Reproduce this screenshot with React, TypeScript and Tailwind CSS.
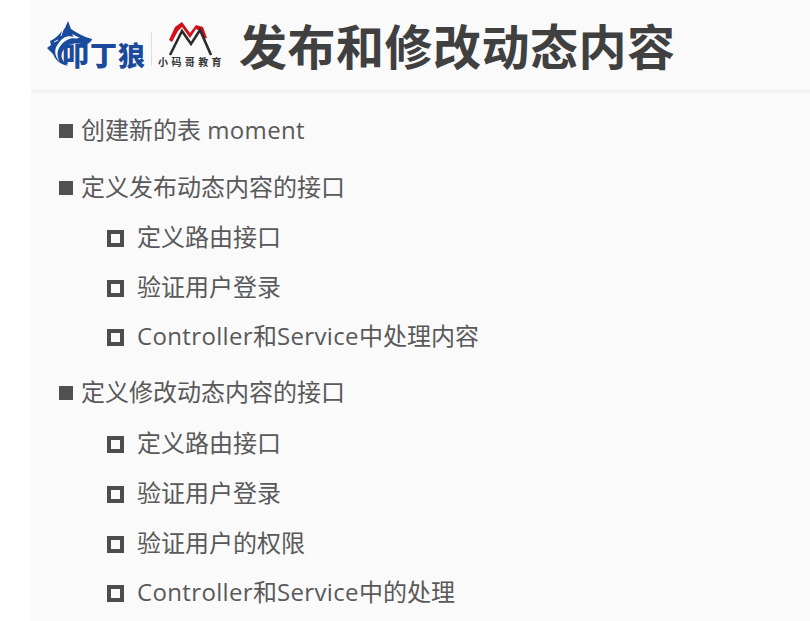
const font = { fontFamily: '"Open Sans","Noto Sans CJK SC",sans-serif' };

function Latin({ children }: { children: React.ReactNode }) {
  return <span className="tracking-[0.35px]">{children}</span>;
}

function L1({ children, className = "" }: { children: React.ReactNode; className?: string }) {
  return (
    <div className={`flex items-center h-[30px] pl-[28px] text-[24px] leading-[30px] text-[#595959] ${className}`}>
      <span className="w-[14px] h-[14px] bg-[#505050] mr-[8px] shrink-0" />
      <span className="whitespace-nowrap -translate-y-px">{children}</span>
    </div>
  );
}

function L2({ children, className = "" }: { children: React.ReactNode; className?: string }) {
  return (
    <div className={`flex items-center h-[30px] pl-[76px] text-[24px] leading-[30px] text-[#595959] ${className}`}>
      <span className="w-[17px] h-[17px] border-[4px] border-[#4d4d4d] mr-[13px] shrink-0" />
      <span className="whitespace-nowrap -translate-y-px">{children}</span>
    </div>
  );
}

function Wolf() {
  return (
    <svg width="50" height="50" viewBox="0 0 50 50" className="absolute left-0 top-0">
      <path
        d="M22 1 L25 9 C31 13 38 17 46 19 C45 23 41 25 36 24 C30 23 23 23 19 28 C14 33 14 40 22 46 C13 44 9 39 7 34 L1 28 L5 25 L4 21 C10 19 14 13 19 8 Z"
        fill="#1a4a9c"
      />
      <path d="M12 24 C17 16 24 14 32 19 C25 17 20 20 16 24 C11 29 10 36 14 42 C8 36 8 29 12 24 Z" fill="#fafafa" />
      <path d="M26 14 L34 18 L28 18 Z" fill="#fafafa" />
      <path d="M18 7 L15 16 M8 22 L12 20" stroke="#fafafa" strokeWidth="1" fill="none" />
    </svg>
  );
}

function MLogo() {
  return (
    <svg width="45" height="35" viewBox="0 0 45 35" className="absolute left-[15px] top-0">
      <path d="M1 18 L7 5 L14 0 L22 11 L28 3 L35 5 L39 16 L35 17 L32 9 L28 7 L22 16 L14 5 L10 9 L4 20 Z" fill="#d2101a" />
      <path d="M2 33 L14 9 L23 22 L32 8 L43 33" fill="none" stroke="#2b2b2b" strokeWidth="2.6" />
    </svg>
  );
}

export default function App() {
  return (
    <div className="w-[810px] h-[621px] overflow-hidden bg-white pl-[31px]" style={font}>
      <div className="h-full bg-[#fafafa]">
        <header className="h-[93px] bg-[#fafafa] border-b-[3px] border-[#f3f3f3] flex items-center">
          <div className="relative w-[105px] h-[50px] ml-[15px] shrink-0">
            <Wolf />
            <span className="absolute left-[16px] top-[21px] text-[27px] leading-[30px] font-black text-[#1a4a9c] whitespace-nowrap tracking-[1px]">
              叩丁狼
            </span>
          </div>
          <div className="w-px h-[34px] bg-[#dddddd] mt-[8px] shrink-0" />
          <div className="relative w-[76px] h-[46px] ml-[1px] shrink-0">
            <MLogo />
            <span className="absolute left-[5px] top-[33px] text-[10px] leading-[14px] font-bold text-[#333] whitespace-nowrap tracking-[3.4px]">
              小码哥教育
            </span>
          </div>
          <h1 className="ml-[10px] text-[48px] leading-[60px] font-bold text-[#404040] whitespace-nowrap tracking-[0.5px] mt-[3px]">
            发布和修改动态内容
          </h1>
        </header>
        <div className="pt-[23px] flex flex-col">
          <L1>创建新的表 <Latin>moment</Latin></L1>
          <L1 className="mt-[27px]">定义发布动态内容的接口</L1>
          <L2 className="mt-[20px]">定义路由接口</L2>
          <L2 className="mt-[20px]">验证用户登录</L2>
          <L2 className="mt-[19px]"><Latin>Controller</Latin>和<Latin>Service</Latin>中处理内容</L2>
          <L1 className="mt-[26px]">定义修改动态内容的接口</L1>
          <L2 className="mt-[21px]">定义路由接口</L2>
          <L2 className="mt-[20px]">验证用户登录</L2>
          <L2 className="mt-[20px]">验证用户的权限</L2>
          <L2 className="mt-[19px]"><Latin>Controller</Latin>和<Latin>Service</Latin>中的处理</L2>
        </div>
      </div>
    </div>
  );
}
